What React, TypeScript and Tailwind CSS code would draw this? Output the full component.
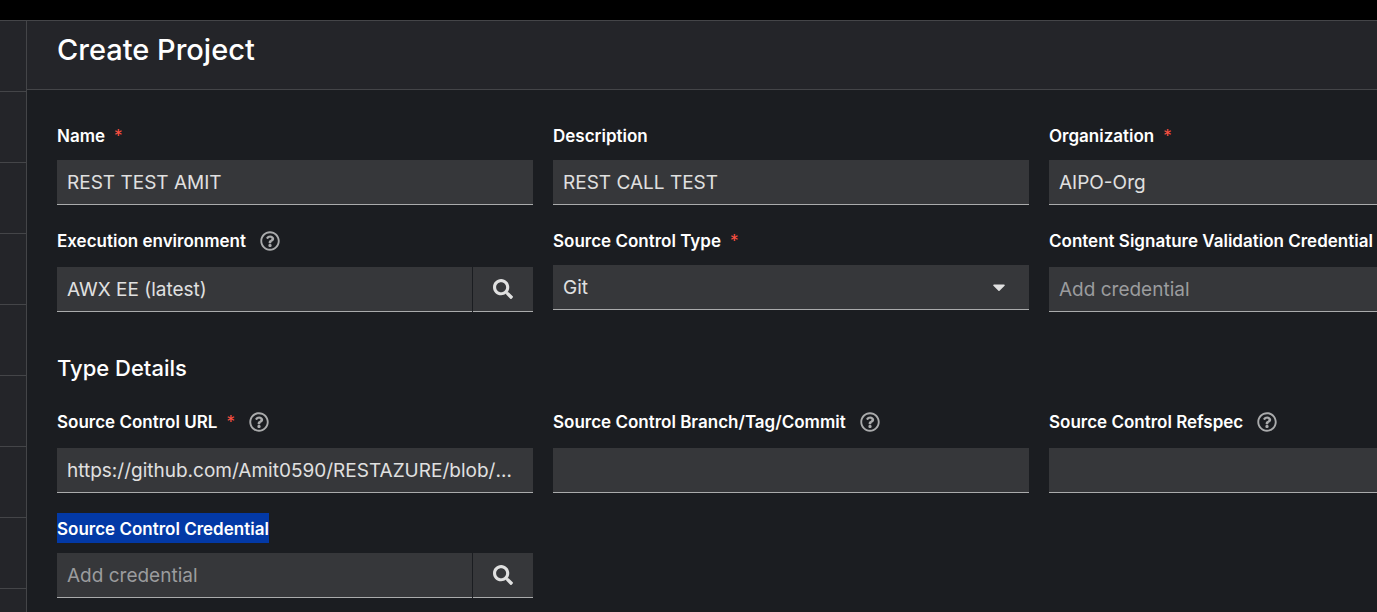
import type { ReactNode } from "react";
import { FaCaretDown, FaRegQuestionCircle, FaSearch } from "react-icons/fa";

type LabelProps = { id: string; text: string; required?: boolean; help?: boolean; selected?: boolean };

const controlStyle =
  "h-[45px] w-full min-w-0 rounded-none border-0 border-b border-[#aaabac] bg-[#36373a] px-[10px] text-[19px] leading-[30px] text-[#e0e0e0] outline-none text-ellipsis placeholder:text-[#9b9c9e] placeholder:opacity-100";

function Field({ id, text, required, help, selected, children }: LabelProps & { children: ReactNode }) {
  return (
    <div className="min-w-0">
      <div className={help ? "mb-[10px] flex h-8 items-start" : "mb-[10px] flex h-[30px] items-start"}>
        <label
          htmlFor={id}
          className={
            selected
              ? "bg-[#0339a6] pt-0.5 text-[17px] leading-7 font-semibold whitespace-nowrap text-white"
              : "pt-0.5 text-[17px] leading-7 font-semibold whitespace-nowrap text-white"
          }
        >
          {text}
        </label>
        {required && <span className="ml-[9px] pt-0.5 text-[17px] leading-7 text-[#fe5142]">*</span>}
        {help && (
          <button type="button" aria-label={`More about ${text}`} className="mt-1.5 ml-[14px] text-[20px] text-[#aaabac]">
            <FaRegQuestionCircle />
          </button>
        )}
      </div>
      {children}
    </div>
  );
}

function TextField({ value = "", placeholder, ...label }: LabelProps & { value?: string; placeholder?: string }) {
  return (
    <Field {...label}>
      <input id={label.id} type="text" defaultValue={value} placeholder={placeholder} className={controlStyle} />
    </Field>
  );
}

function LookupField({ value = "", placeholder, ...label }: LabelProps & { value?: string; placeholder?: string }) {
  return (
    <Field {...label}>
      <div className="flex gap-px">
        <input id={label.id} type="text" defaultValue={value} placeholder={placeholder} className={controlStyle} />
        <button
          type="button"
          aria-label={`Search ${label.text}`}
          className="flex h-[45px] w-[60px] shrink-0 items-center justify-center border-b border-[#aaabac] bg-[#36373a] text-[20px] text-[#e0e0e0]"
        >
          <FaSearch />
        </button>
      </div>
    </Field>
  );
}

const navRows = ["a", "b", "c", "d", "e", "f", "g", "h"];

export default function App() {
  return (
    <div className="flex h-screen flex-col overflow-hidden bg-[#1b1d21] font-[Inter,'Noto_Sans',sans-serif]">
      <div className="h-5 shrink-0 bg-black" />
      <div className="flex min-h-0 flex-1 border-t border-[#444548]">
        <aside className="w-[27px] shrink-0 overflow-hidden border-r border-[#444548] bg-[#242529]">
          {navRows.map((row) => (
            <div key={row} className="h-[71px] border-b border-[#444548]" />
          ))}
        </aside>
        <main className="min-w-0 flex-1 overflow-hidden">
          <header className="border-b border-[#444548] bg-[#242529] px-[30px] pt-2 pb-[18px]">
            <h1 className="text-[29px] leading-[42px] font-medium text-white">Create Project</h1>
          </header>
          <form className="grid grid-cols-[repeat(3,minmax(476px,1fr))] gap-5 p-[30px]">
            <TextField id="name" text="Name" required value="REST TEST AMIT" />
            <TextField id="description" text="Description" value="REST CALL TEST" />
            <TextField id="organization" text="Organization" required value="AIPO-Org" />
            <LookupField id="environment" text="Execution environment" help value="AWX EE (latest)" />
            <Field id="scm-type" text="Source Control Type" required>
              <div className="relative">
                <select id="scm-type" className={`${controlStyle} appearance-none pt-0.5`}>
                  <option>Git</option>
                </select>
                <FaCaretDown className="pointer-events-none absolute top-3 right-5 text-[20px] text-[#e0e0e0]" />
              </div>
            </Field>
            <LookupField
              id="signature"
              text="Content Signature Validation Credential"
              help
              placeholder="Add credential"
            />
            <h2 className="col-span-3 pt-[18px] text-[22px] leading-9 font-medium text-white">Type Details</h2>
            <TextField
              id="scm-url"
              text="Source Control URL"
              required
              help
              value="https://github.com/Amit0590/RESTAZURE/blob/main/rest.yml"
            />
            <TextField id="scm-branch" text="Source Control Branch/Tag/Commit" help />
            <TextField id="scm-refspec" text="Source Control Refspec" help />
            <LookupField id="scm-credential" text="Source Control Credential" selected placeholder="Add credential" />
          </form>
        </main>
      </div>
    </div>
  );
}
